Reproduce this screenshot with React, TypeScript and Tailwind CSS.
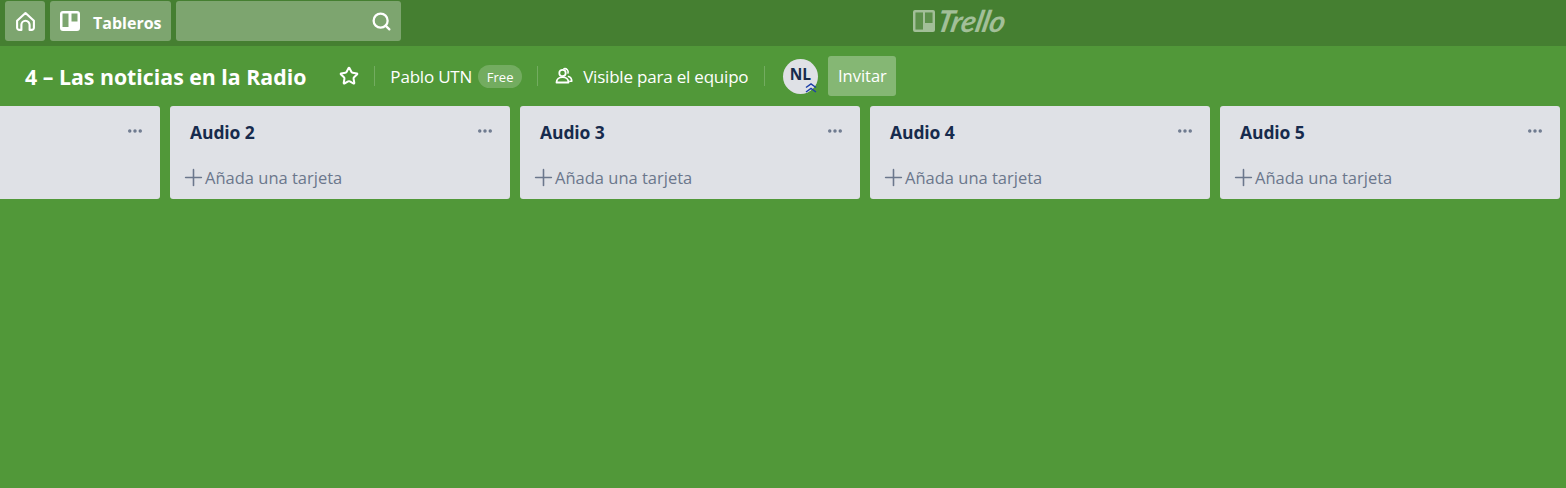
import { Search, Star, Plus, Ellipsis } from "lucide-react";

const listas = ["", "Audio 2", "Audio 3", "Audio 4", "Audio 5"];

function TableroIcon({ className }: { className?: string }) {
  return (
    <svg viewBox="0 0 20 20" className={className} fill="currentColor">
      <path
        fillRule="evenodd"
        d="M3 0h14a3 3 0 0 1 3 3v14a3 3 0 0 1-3 3H3a3 3 0 0 1-3-3V3a3 3 0 0 1 3-3zm-.5 2.500v13.500h6V2.500h-6zm9 0v8h6v-8h-6z"
      />
    </svg>
  );
}

function CasaIcon({ className }: { className?: string }) {
  return (
    <svg viewBox="0 0 22 22" className={className} fill="none" stroke="currentColor" strokeWidth={2.2} strokeLinejoin="round" strokeLinecap="round">
      <path d="M11 2.200 19.800 10.300V17.500a2.300 2.300 0 0 1-2.300 2.300H15.300V14.500a4.300 4.300 0 0 0-8.600 0V19.800H4.500a2.300 2.300 0 0 1-2.300-2.300V10.300z" />
    </svg>
  );
}

function EquipoIcon({ className }: { className?: string }) {
  return (
    <svg viewBox="0 0 18 18" className={className} fill="none" stroke="currentColor" strokeWidth={1.8} strokeLinecap="round" strokeLinejoin="round">
      <circle cx="7.500" cy="6" r="3.200" />
      <path d="M1.500 15.500c0-3.200 2.500-5.300 6-5.300s6 2.100 6 5.300z" />
      <path d="M9 1.800a3.300 3.300 0 0 1 4 4.200M13.500 9.500c2 .7 3.300 2.400 3.300 4.800h-2" strokeWidth={1.6} />
    </svg>
  );
}

function InsigniaIcon({ className }: { className?: string }) {
  return (
    <svg viewBox="0 0 14 14" className={className} fill="none" stroke="currentColor" strokeWidth={1.500}>
      <path d="M2 6.500 7 3l5 3.500M2 11 7 7.500 12 11" />
    </svg>
  );
}

function Separador({ className = "mx-[16px]" }: { className?: string }) {
  return <div className={`h-[20px] w-px bg-white/20 ${className}`} />;
}

function Lista({ titulo }: { titulo: string }) {
  return (
    <div className="flex h-[93px] w-[340px] shrink-0 flex-col rounded-[3px] bg-[#dfe1e6]">
      <div className="flex h-[58px] items-start justify-between pl-[20px] pr-[16px] pt-[14px]">
        <span className="text-[17.500px] font-bold leading-[24px] tracking-[-0.1px] text-[#172b4d]">{titulo}</span>
        <Ellipsis className="mt-[2px] h-[18px] w-[18px] text-[#6b778c]" strokeWidth={2.6} />
      </div>
      {titulo && (
        <div className="flex items-center pl-[10px] text-[16.500px] leading-[24px] text-[#6b778c]">
          <Plus className="mr-[-2px] h-[27px] w-[27px] shrink-0" strokeWidth={1.4} />
          <span>Añada una tarjeta</span>
        </div>
      )}
    </div>
  );
}

export default function App() {
  return (
    <div className="flex h-[488px] w-[1566px] flex-col overflow-hidden bg-[#519839] font-['Open_Sans',sans-serif] text-white">
      <header className="relative flex h-[46px] shrink-0 items-start gap-[5px] bg-[#457f31] pl-[5px] pt-[1px]">
        <button className="flex h-[40px] w-[40px] items-center justify-center rounded-[3px] bg-white/30">
          <CasaIcon className="h-[21px] w-[21px]" />
        </button>
        <button className="flex h-[40px] w-[121px] items-center rounded-[3px] bg-white/30 pl-[10px]">
          <TableroIcon className="h-[20px] w-[20px]" />
          <span className="ml-[13px] pt-[4px] text-[16px] font-bold leading-none">Tableros</span>
        </button>
        <div className="flex h-[40px] w-[225px] items-center justify-end rounded-[3px] bg-white/30 pr-[9px]">
          <Search className="h-[21px] w-[21px]" strokeWidth={2.6} />
        </div>
        <div className="absolute left-[913px] top-[10px] flex items-center text-white/50">
          <svg viewBox="0 0 22 22" className="h-[22px] w-[22px]" fill="currentColor">
            <path
              fillRule="evenodd"
              d="M2 0h18a2 2 0 0 1 2 2v18a2 2 0 0 1-2 2H2a2 2 0 0 1-2-2V2a2 2 0 0 1 2-2zm.500 2.500v17h7.500v-17H2.500zm9.500 0v10.500h7.500V2.500H12z"
            />
            <path d="M2.500 2.500h7.500v17H2.500zM12 2.500h7.500V13H12z" opacity="0.25" />
          </svg>
          <span className="ml-[3px] mt-[-2px] -skew-x-12 font-['Lato',sans-serif] text-[30px] font-bold italic leading-[24px] tracking-[-0.2px]">
            Trello
          </span>
        </div>
      </header>

      <div className="flex h-[60px] shrink-0 items-center pl-[25px]">
        <h1 className="pt-[1px] text-[21.300px] font-bold leading-none">4 – Las noticias en la Radio</h1>
        <Star className="ml-[33px] h-[20px] w-[20px]" strokeWidth={2.4} />
        <Separador className="ml-[15px] mr-[15px]" />
        <span className="text-[17px] leading-none tracking-[-0.2px]">Pablo UTN</span>
        <span className="ml-[6px] flex h-[23px] w-[44px] items-center justify-center rounded-full bg-white/20 pt-[2px] text-[13px] leading-none">
          Free
        </span>
        <Separador className="ml-[15px] mr-[17px]" />
        <EquipoIcon className="h-[18px] w-[18px]" />
        <span className="ml-[10px] text-[17px] leading-none tracking-[-0.2px]">Visible para el equipo</span>
        <Separador className="ml-[16px] mr-[16px]" />
        <div className="relative ml-[2px] flex h-[35px] w-[35px] items-center justify-center rounded-full bg-[#dfe1e6] pb-[2px] pr-[1px] text-[15.500px] font-bold text-[#172b4d]">
          NL
          <InsigniaIcon className="absolute bottom-[-1px] right-0 h-[14px] w-[14px] text-[#1d3fa8]" />
        </div>
        <button className="ml-[10px] flex h-[40px] w-[68px] items-center justify-center rounded-[3px] bg-white/30 text-[16.500px] leading-none">
          Invitar
        </button>
      </div>

      <div className="ml-[-180px] flex items-start gap-[10px]">
        {listas.map((titulo, i) => (
          <Lista key={i} titulo={titulo} />
        ))}
      </div>
    </div>
  );
}
